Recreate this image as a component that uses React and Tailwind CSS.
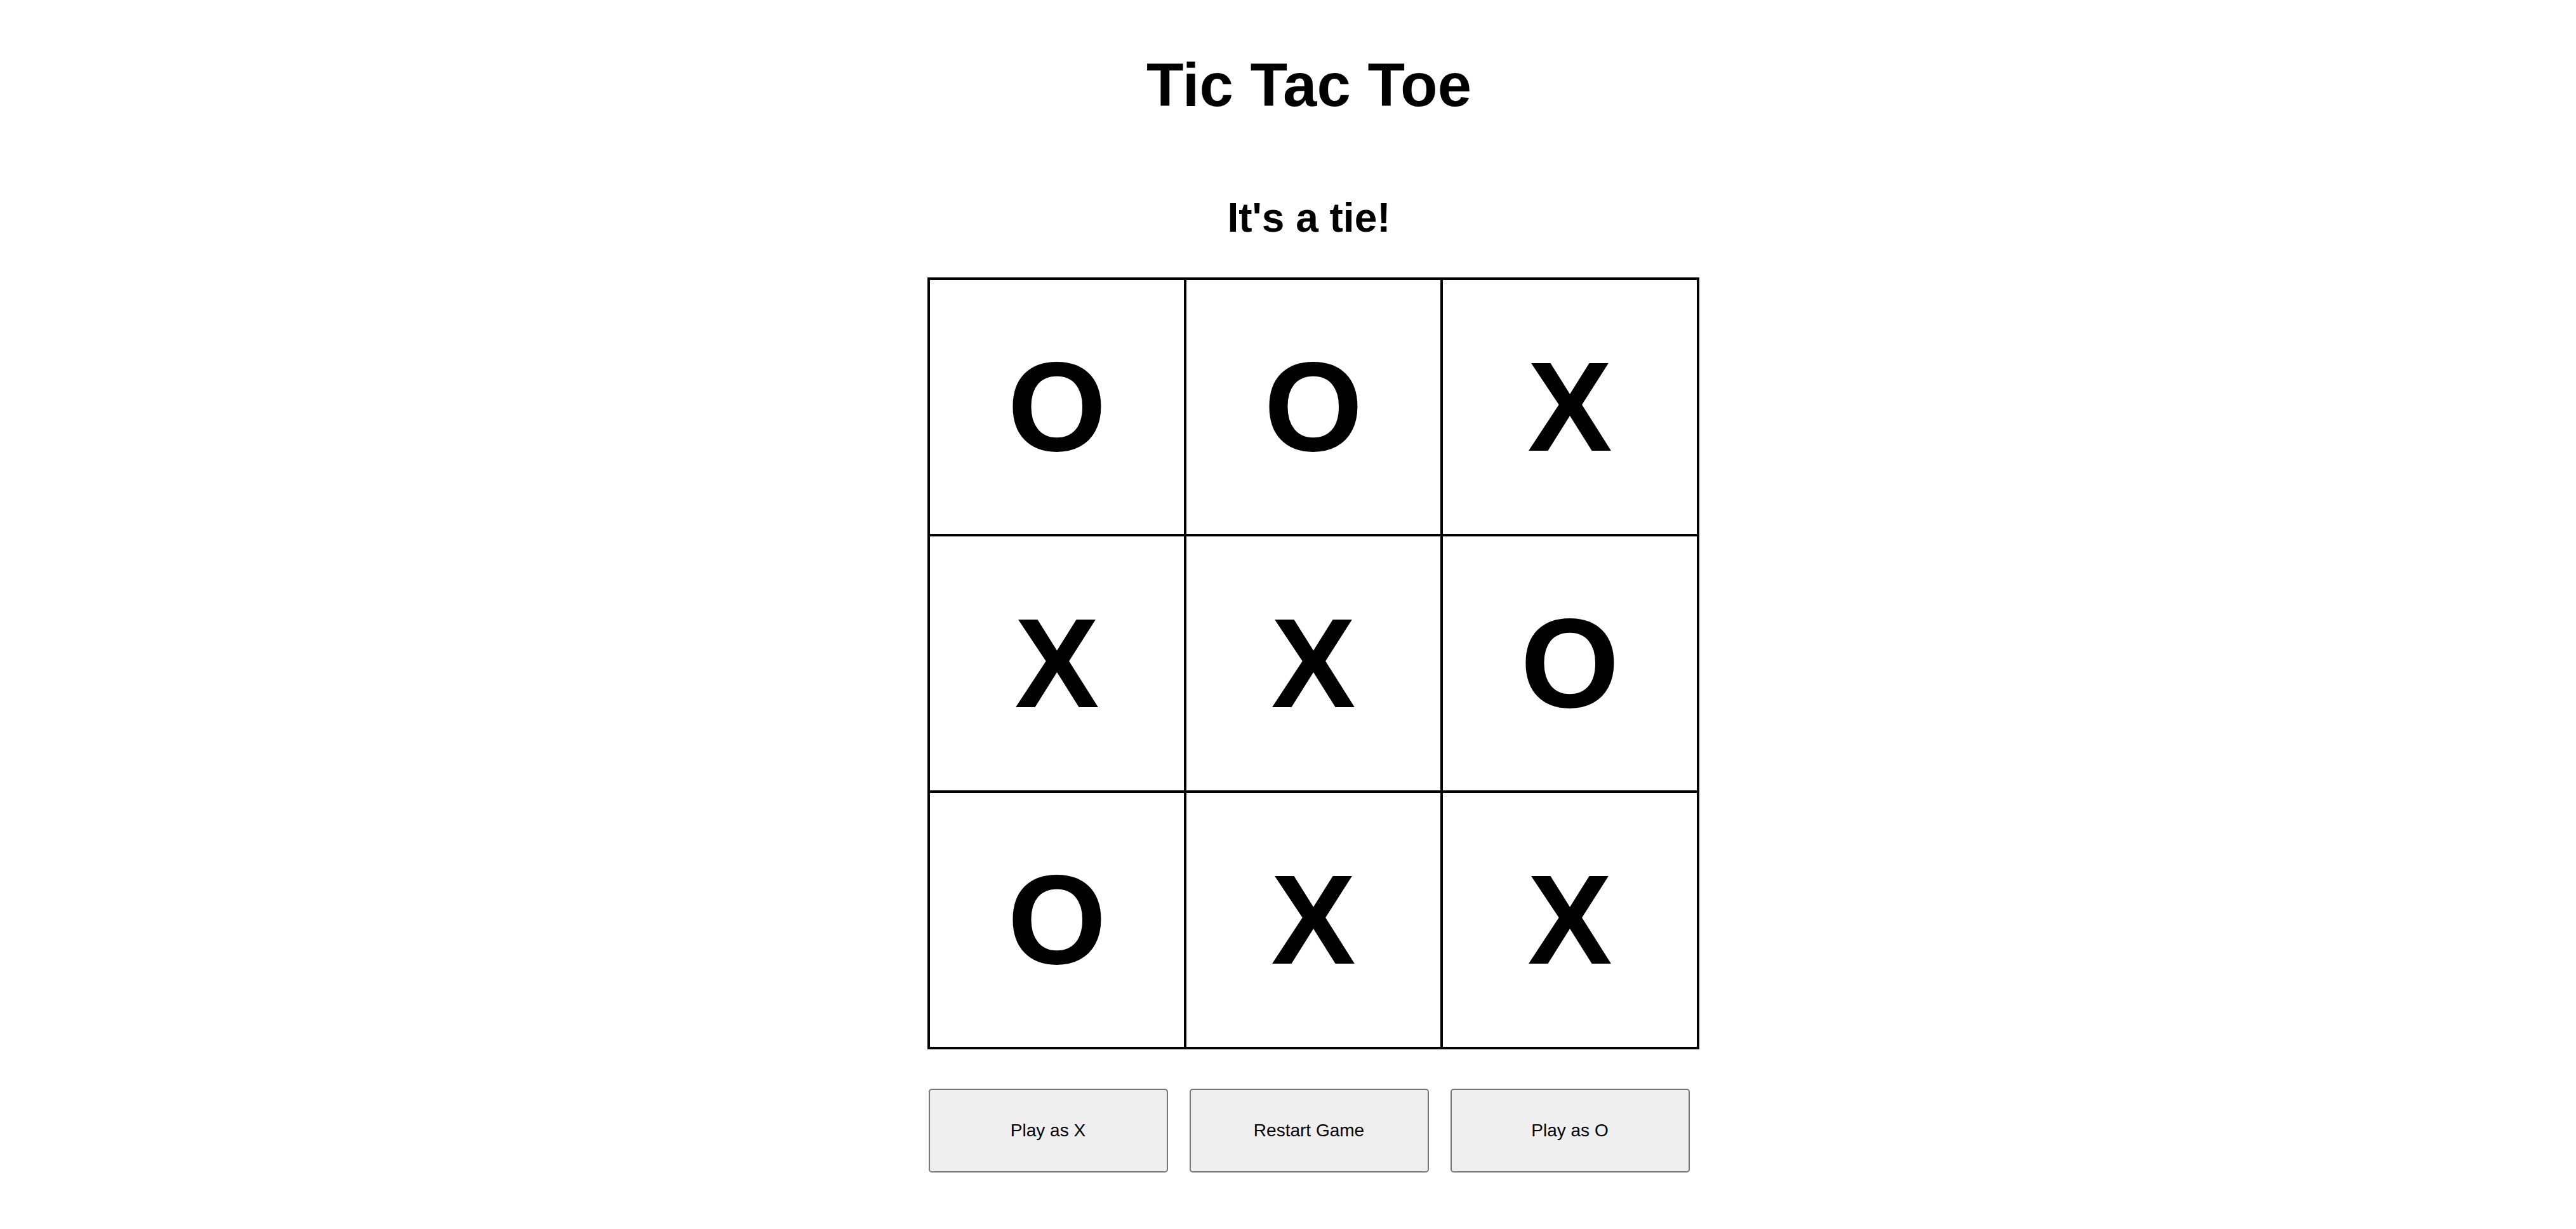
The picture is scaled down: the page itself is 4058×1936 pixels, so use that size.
import React, { useState } from 'react';

const FINAL_BOARD = ['O', 'O', 'X', 'X', 'X', 'O', 'O', 'X', 'X'];

const Cell = ({ value }) => (
  <div className="flex h-[400px] w-[400px] items-center justify-center bg-white text-[200px] font-bold leading-none text-black">
    {value}
  </div>
);

const GameButton = ({ label, onClick }) => (
  <button
    onClick={onClick}
    className="h-[132px] w-[377px] rounded-[5px] border-2 border-[#767676] bg-[#efefef] text-[28px] font-normal text-black"
  >
    {label}
  </button>
);

export default function App() {
  const [board] = useState(FINAL_BOARD);

  return (
    <div
      className="flex min-h-screen w-[4124px] flex-col items-center bg-white text-black"
      style={{ fontFamily: '"Liberation Sans", Arial, sans-serif' }}
    >
      <h1 className="mt-[86px] text-[96px] font-bold leading-none">Tic Tac Toe</h1>
      <h2 className="mt-[129px] text-[64px] font-bold leading-none">It's a tie!</h2>

      <div className="ml-[14px] mt-[62px] grid grid-cols-3 gap-[4px] bg-black p-[4px]">
        {board.map((v, i) => (
          <Cell key={i} value={v} />
        ))}
      </div>

      <div className="mt-[62px] flex gap-[34px]">
        <GameButton label="Play as X" />
        <GameButton label="Restart Game" />
        <GameButton label="Play as O" />
      </div>
    </div>
  );
}
